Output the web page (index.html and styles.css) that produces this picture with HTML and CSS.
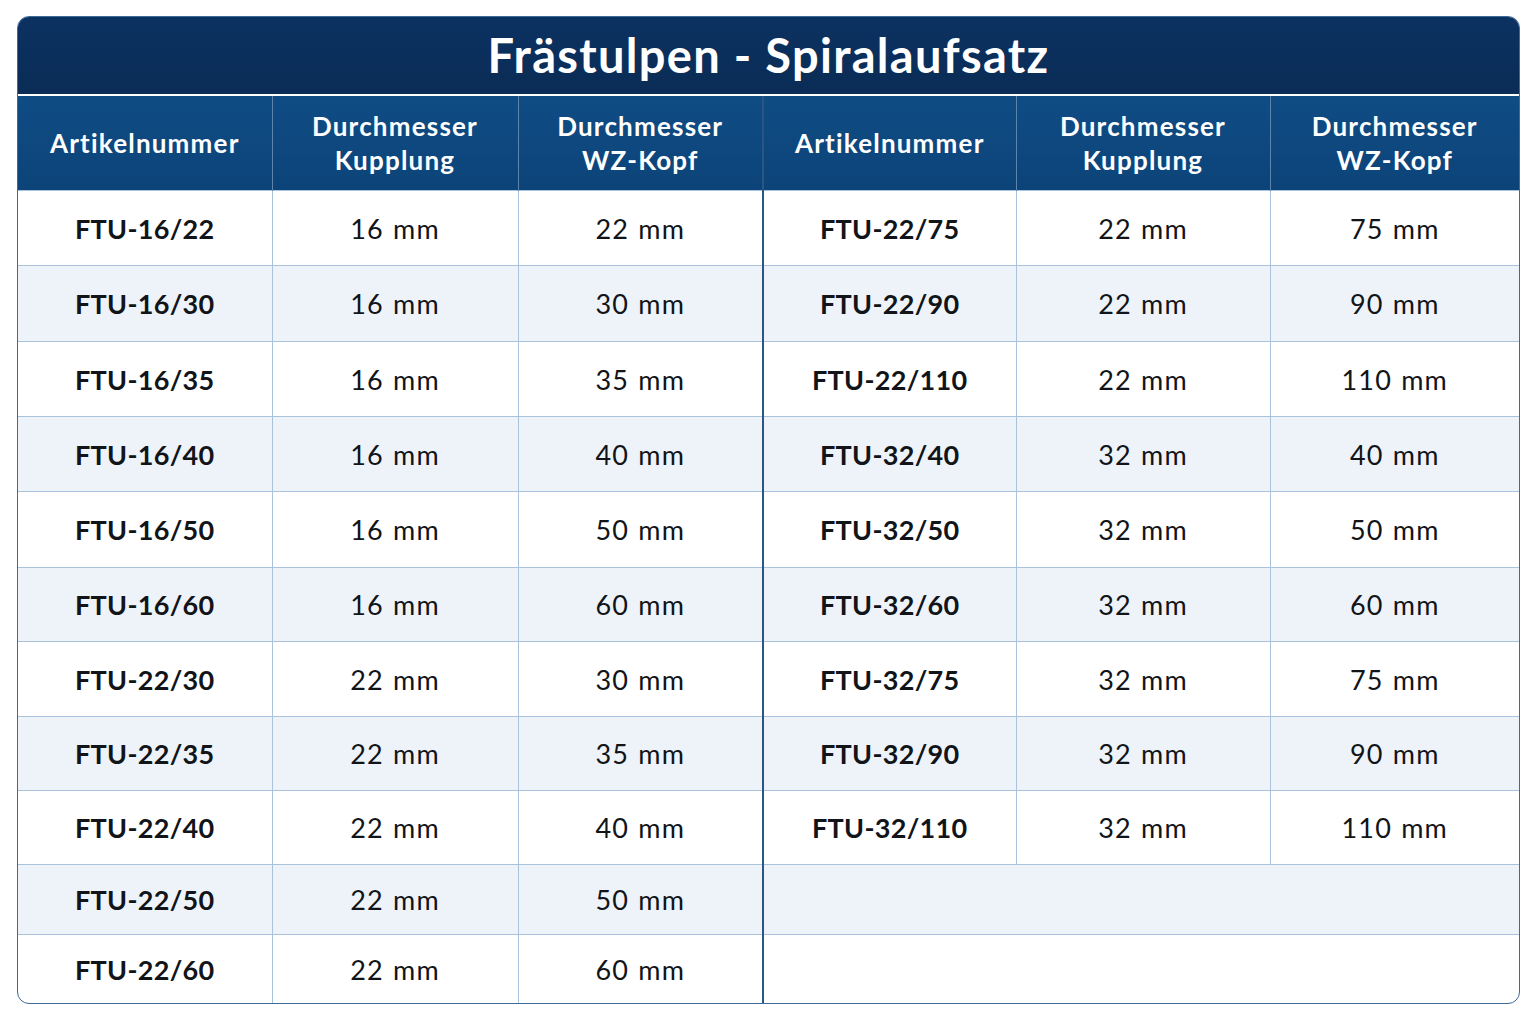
FILE: index.html
```html
<!DOCTYPE html>
<html lang="de">
<head>
<meta charset="utf-8">
<title>Frästulpen - Spiralaufsatz</title>
<link rel="stylesheet" href="styles.css">
</head>
<body>
<div class="card">
  <div class="title">Frästulpen - Spiralaufsatz</div>
  <table class="grid">
    <colgroup>
      <col class="c1"><col class="c2"><col class="c3"><col class="c4"><col class="c5"><col class="c6">
    </colgroup>
    <thead>
      <tr>
        <th>Artikelnummer</th>
        <th>Durchmesser<br>Kupplung</th>
        <th class="split">Durchmesser<br>WZ-Kopf</th>
        <th>Artikelnummer</th>
        <th>Durchmesser<br>Kupplung</th>
        <th>Durchmesser<br>WZ-Kopf</th>
      </tr>
    </thead>
    <tbody>
      <tr class="r75"><td class="art">FTU-16/22</td><td>16 mm</td><td class="split">22 mm</td><td class="art">FTU-22/75</td><td>22 mm</td><td>75 mm</td></tr>
      <tr class="alt r76"><td class="art">FTU-16/30</td><td>16 mm</td><td class="split">30 mm</td><td class="art">FTU-22/90</td><td>22 mm</td><td>90 mm</td></tr>
      <tr class="r75"><td class="art">FTU-16/35</td><td>16 mm</td><td class="split">35 mm</td><td class="art">FTU-22/110</td><td>22 mm</td><td>110 mm</td></tr>
      <tr class="alt r75"><td class="art">FTU-16/40</td><td>16 mm</td><td class="split">40 mm</td><td class="art">FTU-32/40</td><td>32 mm</td><td>40 mm</td></tr>
      <tr class="r76"><td class="art">FTU-16/50</td><td>16 mm</td><td class="split">50 mm</td><td class="art">FTU-32/50</td><td>32 mm</td><td>50 mm</td></tr>
      <tr class="alt r74"><td class="art">FTU-16/60</td><td>16 mm</td><td class="split">60 mm</td><td class="art">FTU-32/60</td><td>32 mm</td><td>60 mm</td></tr>
      <tr class="r75"><td class="art">FTU-22/30</td><td>22 mm</td><td class="split">30 mm</td><td class="art">FTU-32/75</td><td>32 mm</td><td>75 mm</td></tr>
      <tr class="alt r74"><td class="art">FTU-22/35</td><td>22 mm</td><td class="split">35 mm</td><td class="art">FTU-32/90</td><td>32 mm</td><td>90 mm</td></tr>
      <tr class="r74"><td class="art">FTU-22/40</td><td>22 mm</td><td class="split">40 mm</td><td class="art">FTU-32/110</td><td>32 mm</td><td>110 mm</td></tr>
      <tr class="alt r70"><td class="art">FTU-22/50</td><td>22 mm</td><td class="split">50 mm</td><td class="empty" colspan="3"></td></tr>
      <tr class="r69 last"><td class="art">FTU-22/60</td><td>22 mm</td><td class="split">60 mm</td><td class="empty" colspan="3"></td></tr>
    </tbody>
  </table>
</div>
</body>
</html>
```
FILE: styles.css
```css
html, body {
  margin: 0;
  padding: 0;
  background: #ffffff;
}
body {
  font-family: Lato, "Noto Sans", "Liberation Sans", sans-serif;
  color: #111418;
}
.card {
  width: 1501px;
  margin: 16px 0 0 17px;
  border: 1px solid #3d6a98;
  border-radius: 12px;
  overflow: hidden;
  background: #ffffff;
}
.title {
  height: 77px;
  background: linear-gradient(180deg, #0c3262 0%, #0a2c55 100%);
  color: #ffffff;
  font-weight: 700;
  font-size: 47px;
  line-height: 77px;
  text-align: center;
  letter-spacing: 1.3px;
  border-bottom: 2px solid #ffffff;
}
.grid {
  width: 1501px;
  border-collapse: collapse;
  table-layout: fixed;
}
.c1 { width: 254px; }
.c2 { width: 246px; }
.c3 { width: 245px; }
.c4 { width: 253px; }
.c5 { width: 254px; }
.c6 { width: 249px; }
th {
  height: 94px;
  padding: 0;
  background: linear-gradient(180deg, #0f4c84 0%, #0c4479 100%);
  color: #ffffff;
  font-weight: 700;
  font-size: 26px;
  line-height: 34px;
  text-align: center;
  border-left: 1px solid #5d84ab;
  letter-spacing: 1.2px;
}
th:first-child { border-left: none; }
td {
  padding: 0;
  text-align: center;
  font-size: 27px;
  border-left: 1px solid #a9c3dd;
  border-top: 1px solid #a9c3dd;
  letter-spacing: 1.2px;
  word-spacing: 1px;
}
td:first-child { border-left: none; }
td.art { font-weight: 700; letter-spacing: 0.3px; word-spacing: 0; }
th.split, td.split { border-right: 2px solid #2a5686; }
tr.alt td { background: #eef3f9; }
tr.r75 td { height: 74px; }
tr.r76 td { height: 75px; }
tr.r74 td { height: 73px; }
tr.r70 td { height: 69px; }
tr.r69 td { height: 68px; }
td.empty { border-left: none; }
```
